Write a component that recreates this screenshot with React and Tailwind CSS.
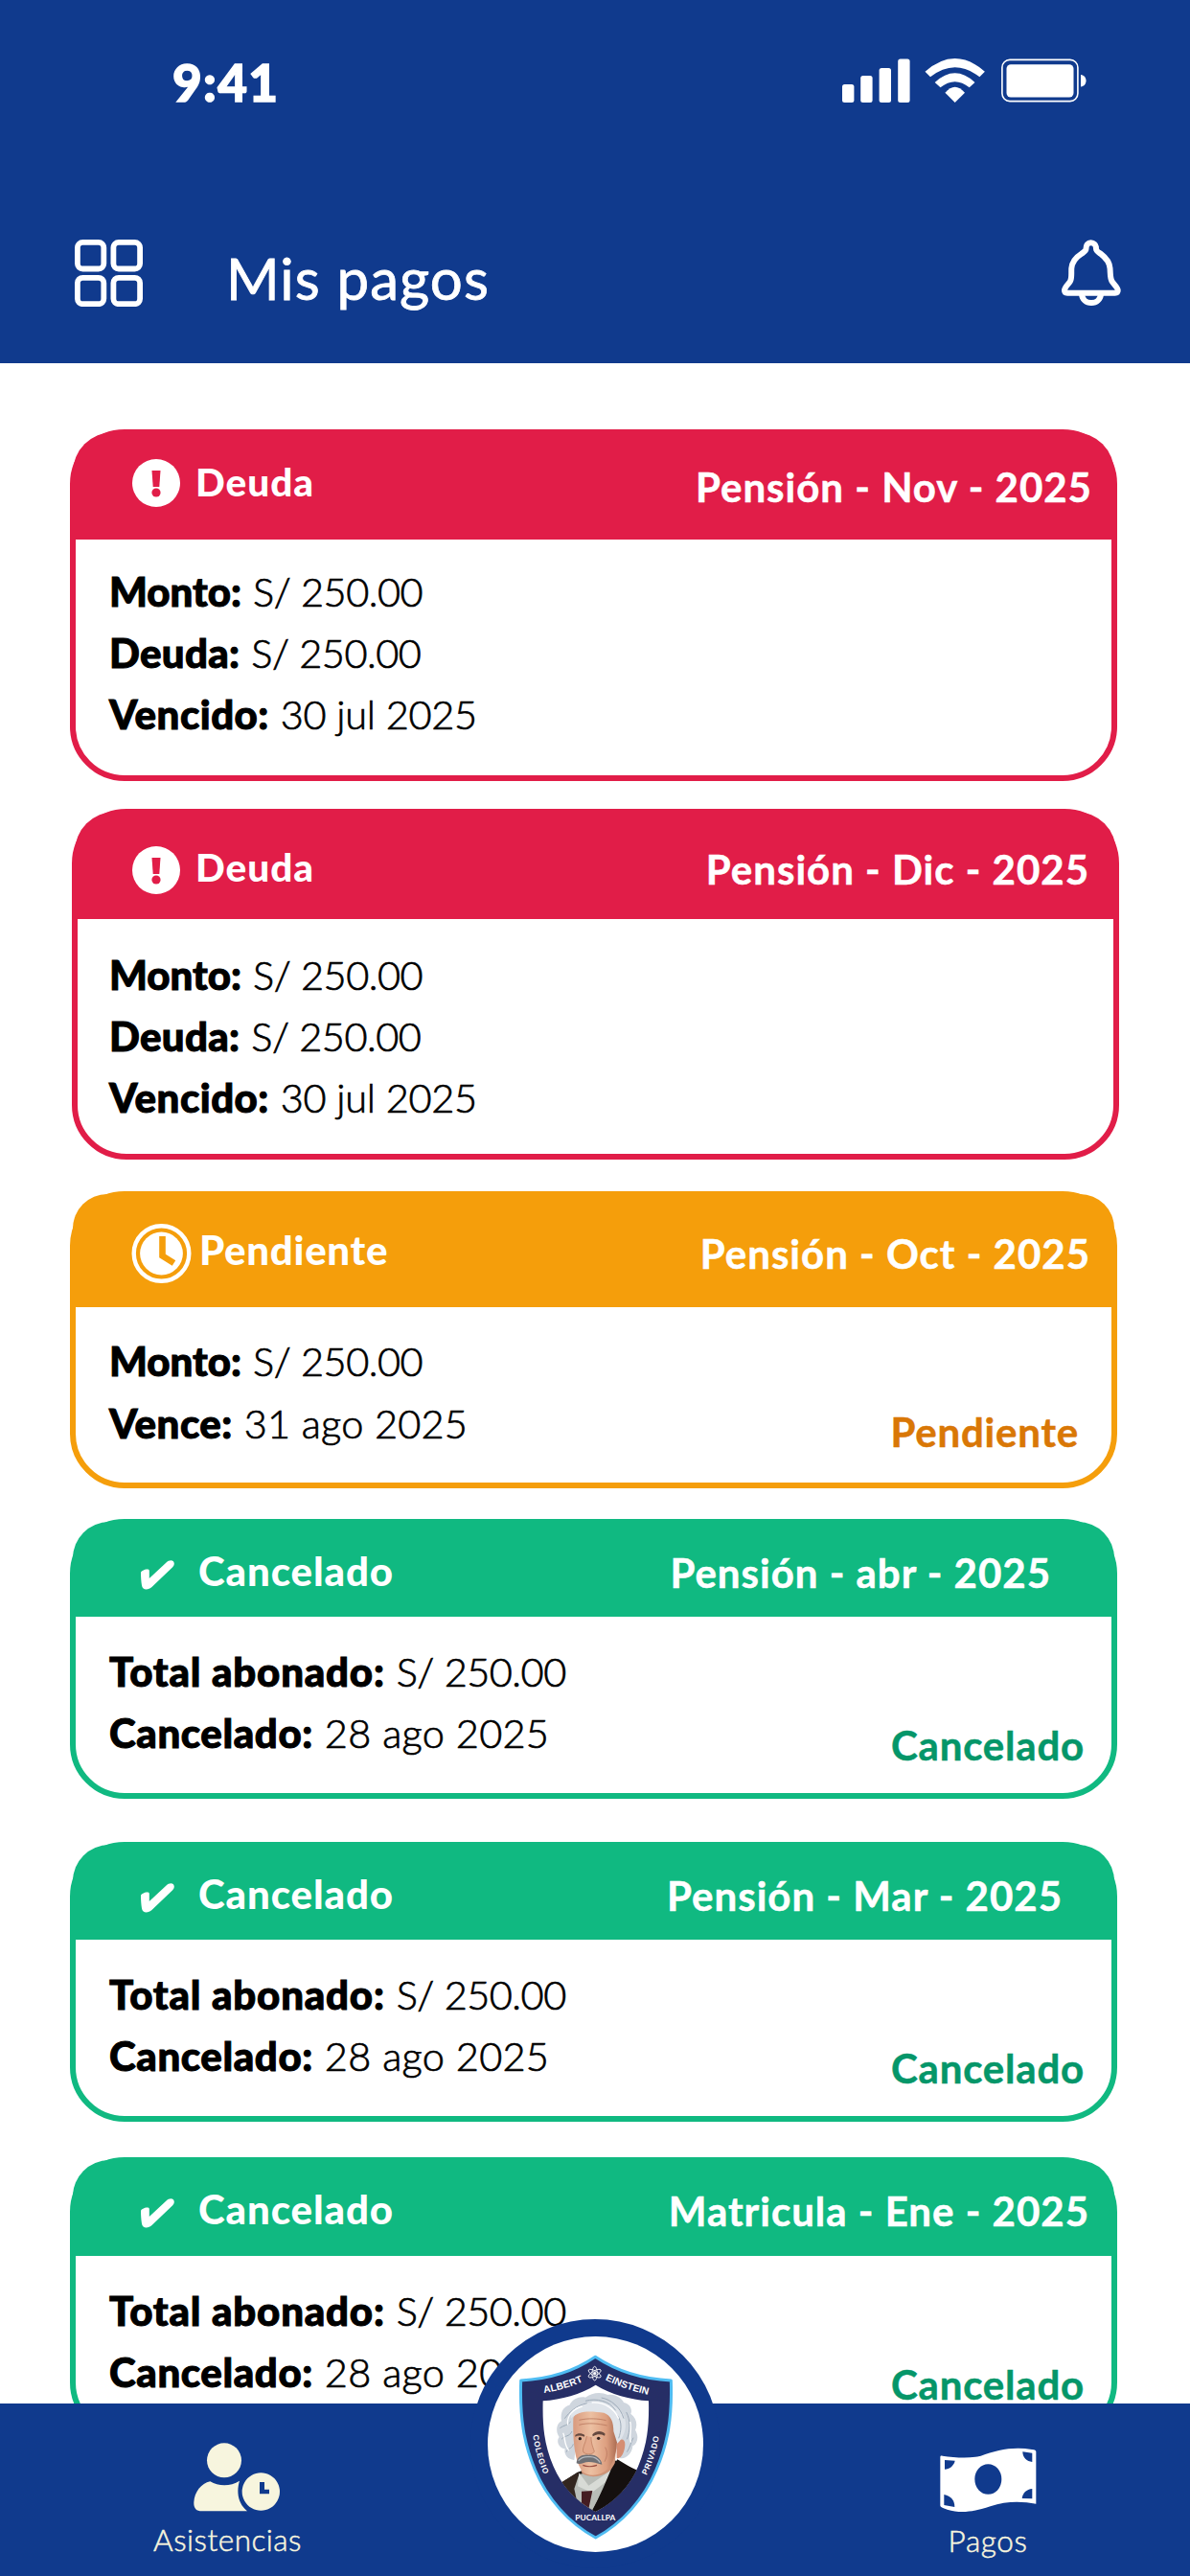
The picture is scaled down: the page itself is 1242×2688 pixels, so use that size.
import React from 'react'

const debtRows = [
  ['Monto:', 'S/ 250.00', 'tracking-[0px]', 'tracking-[-0.5px]'],
  ['Deuda:', 'S/ 250.00', 'tracking-[0.3px]', 'tracking-[-0.5px]'],
  ['Vencido:', '30 jul 2025', 'tracking-[0.5px]', 'tracking-[-0.3px]'],
]

const pendingRows = [
  ['Monto:', 'S/ 250.00', 'tracking-[0px]', 'tracking-[-0.5px]'],
  ['Vence:', '31 ago 2025', 'tracking-[0.5px]', 'tracking-[0.2px]'],
]

const paidRows = [
  ['Total abonado:', 'S/ 250.00', 'tracking-[0.8px]', 'tracking-[-0.5px]'],
  ['Cancelado:', '28 ago 2025', 'tracking-[0.6px]', 'tracking-[0.3px]'],
]

const paid = {
  status: 'Cancelado',
  tone: 'paid',
  icon: 'mt-[40px] w-[60px]',
  label: 'mt-[30px] text-[42px] tracking-[0.9px]',
  titleClass: 'mt-[32px]',
  body: 'pl-[35px] pt-[25px] leading-[64px]',
  rows: paidRows,
  badge: 'mt-[88px] mr-[28px]',
}

const payments = [
  {
    status: 'Deuda',
    title: 'Pensión - Nov - 2025',
    tone: 'debt',
    card: 'ml-[73px] mt-[69px] h-[367px]',
    header: 'h-[112px] pl-[62px] pr-[23px]',
    icon: 'mt-[28px] w-[66px]',
    label: 'mt-[32px] text-[40.5px] tracking-[1px]',
    titleClass: 'mt-[36px]',
    body: 'pl-[35px] pt-[22px] leading-[64px]',
    rows: debtRows,
  },
  {
    status: 'Deuda',
    title: 'Pensión - Dic - 2025',
    tone: 'debt',
    card: 'ml-[75px] mt-[29px] h-[366px]',
    header: 'h-[112px] pl-[60px] pr-[28px]',
    icon: 'mt-[36px] w-[66px]',
    label: 'mt-[38px] text-[40.5px] tracking-[1px]',
    titleClass: 'mt-[39px]',
    body: 'pl-[33px] pt-[26px] leading-[64px]',
    rows: debtRows,
  },
  {
    status: 'Pendiente',
    title: 'Pensión - Oct - 2025',
    tone: 'pending',
    card: 'ml-[73px] mt-[33px] h-[310px]',
    header: 'h-[118px] pl-[61px] pr-[25px]',
    icon: 'mt-[31px] w-[71px]',
    label: 'mt-[37px] text-[42px] tracking-[0.7px]',
    titleClass: 'mt-[41px]',
    body: 'pl-[35px] pt-[24px] leading-[65px]',
    rows: pendingRows,
    badge: 'mt-[85px] mr-[34px]',
  },
  {
    ...paid,
    title: 'Pensión - abr - 2025',
    card: 'ml-[73px] mt-[32px] h-[292px]',
    header: 'h-[99px] pl-[71px] pr-[66px]',
  },
  {
    ...paid,
    title: 'Pensión - Mar - 2025',
    card: 'ml-[73px] mt-[45px] h-[292px]',
    header: 'h-[99px] pl-[71px] pr-[54px]',
  },
  {
    ...paid,
    title: 'Matricula - Ene - 2025',
    card: 'ml-[73px] mt-[37px] h-[292px]',
    header: 'h-[100px] pl-[71px] pr-[26px]',
  },
]

const tones = {
  debt: { border: 'border-[#e11d48]', bg: 'bg-[#e11d48]', text: 'text-[#e11d48]', radius: 'rounded-t-[42px]' },
  pending: { border: 'border-[#f59e0b]', bg: 'bg-[#f59e0b]', text: 'text-[#d97706]', radius: 'rounded-t-[36px]' },
  paid: { border: 'border-[#10b981]', bg: 'bg-[#10b981]', text: 'text-[#059669]', radius: 'rounded-t-[38px]' },
}

function AlertIcon() {
  return (
    <svg width="50" height="50" viewBox="0 0 50 50">
      <circle cx="25" cy="25" r="25" fill="#fff" />
      <path d="M20.5 12h9l-1.2 17h-6.6z" fill="#e11d48" />
      <circle cx="25" cy="35" r="4.6" fill="#e11d48" />
    </svg>
  )
}

function ClockIcon() {
  return (
    <svg width="63" height="62" viewBox="0 0 63 62">
      <circle cx="31.5" cy="31" r="28.8" fill="none" stroke="#fff" strokeWidth="4.4" />
      <circle cx="31.5" cy="31" r="22.4" fill="#fff" />
      <path d="M32.5 13v20.5l12 7.5" fill="none" stroke="#f59e0b" strokeWidth="6.6" />
    </svg>
  )
}

function CheckIcon() {
  return (
    <svg width="35" height="31" viewBox="0 0 35 31" fill="#fff">
      <path d="M0 13C0 10.5 8.6 7.5 8.8 11V19L26.5 2.5C29.5-.4 34.5-.6 34.8 3.5C34.8 5 34.3 6 33.2 7.2L11.5 28C8 31.3 1.8 31.8 1 26.5C.3 22 0 17 0 13Z" />
    </svg>
  )
}

function StatusIcon({ tone }) {
  if (tone === 'debt') return <AlertIcon />
  if (tone === 'pending') return <ClockIcon />
  return <CheckIcon />
}

function PaymentCard({ item }) {
  const tone = tones[item.tone]
  return (
    <article className={`w-[1093px] shrink-0 rounded-[57px] border-[6px] bg-white ${tone.border} ${item.card}`}>
      <div className={`-mx-[3px] -mt-[3px] flex items-start leading-none text-white ${tone.bg} ${tone.radius} ${item.header}`}>
        <div className={`shrink-0 ${item.icon}`}>
          <StatusIcon tone={item.tone} />
        </div>
        <span className={`font-black ${item.label}`}>{item.status}</span>
        <h2 className={`ml-auto text-[42px] font-bold tracking-[1px] whitespace-nowrap [-webkit-text-stroke:0.5px_white] ${item.titleClass}`}>
          {item.title}
        </h2>
      </div>
      <div className={`flex items-start justify-between text-[42px] text-black ${item.body}`}>
        <div>
          {item.rows.map(([name, value, nameTracking, valueTracking]) => (
            <p key={name} className="whitespace-nowrap">
              <span className={`font-black [-webkit-text-stroke:1px_black] ${nameTracking}`}>{name}</span>
              <span className={`ml-[12px] text-[41.5px] font-light [-webkit-text-stroke:0.7px_black] ${valueTracking}`}>{value}</span>
            </p>
          ))}
        </div>
        {item.badge && (
          <span className={`font-bold leading-none tracking-[0.8px] [-webkit-text-stroke:0.5px_currentColor] ${tone.text} ${item.badge}`}>
            {item.status}
          </span>
        )}
      </div>
    </article>
  )
}

function StatusBar() {
  return (
    <div className="flex h-[170px] items-start pl-[180px] pr-[108px] text-white">
      <span className="mt-[59px] text-[53px] font-black leading-none tracking-[1.3px] [-webkit-text-stroke:1.5px_white]">9:41</span>
      <div className="ml-auto mt-[61px] flex items-start">
        <svg width="71" height="46" viewBox="0 0 71 46" fill="#fff">
          <rect x="0" y="27" width="12.4" height="19" rx="2.5" />
          <rect x="19.2" y="18" width="12.4" height="28" rx="2.5" />
          <rect x="38.6" y="10" width="12.4" height="36" rx="2.5" />
          <rect x="58.2" y="0.5" width="12.4" height="45.5" rx="2.5" />
        </svg>
        <svg className="ml-[15px]" width="64" height="46" viewBox="0 0 64 46" fill="#fff">
          <path d="M0.5 13.7Q31.7-13.7 62.9 13.7L57.4 19.3Q31.7-.7 6 19.3Z" />
          <path d="M10.7 25Q31.7 5.6 52.5 25L46.7 30.3Q31.7 18.3 16.5 30.3Z" />
          <path d="M21.4 35.7Q31.7 23.7 42 35.7L31.7 46Z" />
        </svg>
        <svg className="ml-[16px]" width="89" height="46" viewBox="0 0 89 46" fill="#fff">
          <rect x="0.9" y="1.4" width="79" height="43.2" rx="8" fill="none" stroke="#fff" strokeWidth="1.6" />
          <rect x="5.5" y="6.2" width="70" height="34.4" rx="4.5" />
          <path d="M83 17C86.5 17.5 88.5 20 88.5 23.3S86.5 29 83 29.6Z" />
        </svg>
      </div>
    </div>
  )
}

function TopBar() {
  return (
    <div className="flex items-start pl-[78px] pr-[72px] text-white">
      <svg className="mt-[80px]" width="71" height="70" viewBox="0 0 71 70" fill="none" stroke="#fff" strokeWidth="5.8">
        <rect x="2.9" y="2.9" width="27.4" height="27.6" rx="5.5" />
        <rect x="40.4" y="2.9" width="27.7" height="27.6" rx="5.5" />
        <rect x="2.9" y="39.8" width="27.4" height="27.4" rx="5.5" />
        <rect x="40.4" y="39.8" width="27.7" height="27.4" rx="5.5" />
      </svg>
      <h1 className="ml-[87px] mt-[90px] text-[60px] leading-none tracking-[1.1px] [-webkit-text-stroke:0.8px_white]">Mis pagos</h1>
      <svg className="ml-auto mt-[80px]" width="62" height="70" viewBox="0 0 62 70" fill="none" stroke="#fff" strokeWidth="6">
        <path d="M25.5 9.5C25.5 5.5 27.5 3.3 30.5 3.3S36 5.5 36 9.5C36 12 38 13 41 15C47 19.5 50 23.5 50.5 30C51 36 50.5 40 52.5 43.5C54.5 47 58.7 49.5 58.7 53C58.7 54.8 57.5 55.7 55.7 55.7H6C4 55.7 3 54.8 3 53C3 49.5 6.8 47 9 43.5C10.8 40 10 36 10.3 30C11 23.5 14 19 20.5 15C23 13 25.5 12 25.5 9.5Z" />
        <path d="M21 57C21.5 62.5 25.5 66 31 66S40.5 62.5 41 57" />
      </svg>
    </div>
  )
}

function SchoolLogo() {
  return (
    <svg width="225" height="225" viewBox="114 143 675 675">
      <defs>
        <clipPath id="window">
          <path d="M452 295C405 325 345 340 287 345C285 430 292 485 320 550C345 610 392 660 452 692C512 660 560 610 585 550C612 485 620 430 618 345C560 340 500 325 452 295Z" />
        </clipPath>
        <linearGradient id="skin" x1="0" x2="1">
          <stop offset="0" stopColor="#d99a7e" />
          <stop offset="0.4" stopColor="#ecc0a2" />
          <stop offset="0.75" stopColor="#dd9f80" />
          <stop offset="1" stopColor="#a9694f" />
        </linearGradient>
        <path id="arcAlbert" d="M290 320Q365 308 424 279" />
        <path id="arcEinstein" d="M482 279Q545 310 625 328" />
        <path id="arcColegio" d="M256 452Q265 520 294 584" />
        <path id="arcPrivado" d="M611 578Q640 520 652 448" />
      </defs>

      <path
        d="M451 207C385 252 305 277 218 281C214 400 228 480 262 560C300 650 368 728 452 773C536 728 604 650 642 560C677 480 692 400 688 281C600 277 518 252 451 207Z"
        fill="#262e66" stroke="#4fbcf2" strokeWidth="9" strokeLinejoin="round"
      />
      <path d="M452 295C405 325 345 340 287 345C285 430 292 485 320 550C345 610 392 660 452 692C512 660 560 610 585 550C612 485 620 430 618 345C560 340 500 325 452 295Z" fill="#fff" />

      {/* Portrait */}
      <g clipPath="url(#window)">
        <path d="M330 610L395 568L510 530L590 565L620 700H330Z" fill="#1b1412" />
        <path d="M345 600L398 568L395 670Z" fill="#33261f" />
        <path d="M400 575L505 550L488 600L440 690H400L385 620Z" fill="#b9bdb8" />
        <path d="M398 470L520 440L512 545C490 585 430 590 408 570Z" fill="#cf9376" />
        <path d="M400 570L430 610L500 562L508 580L440 632L396 612Z" fill="#d8dbd6" />
        <path d="M408 628L442 626L428 692H408Z" fill="#451d22" />
        <path d="M500 560L520 528L590 570L560 640L440 695L478 612Z" fill="#15100f" />
        {/* Hair */}
        <path
          d="M385 530C362 528 352 510 356 495C335 492 328 470 338 458C325 440 330 415 345 408C340 380 352 362 370 358C380 338 402 330 420 334C440 318 470 316 490 326C515 322 535 338 540 350C560 354 568 372 562 385C580 398 584 420 576 436C588 455 584 478 568 486C566 512 545 528 528 524L500 450L480 385L400 395Z"
          fill="#cfd6de"
        />
        <path d="M382 400C384 378 440 368 480 374C510 380 520 410 520 440C522 480 515 520 500 545C480 580 430 586 410 565C388 535 380 480 382 400Z" fill="url(#skin)" />
        <path d="M517 478C528 460 545 462 544 482C543 505 532 528 518 524Z" fill="#d58d72" />
        <path d="M375 400C400 372 440 378 478 382C500 390 508 410 508 440L520 478C545 455 552 420 540 390C520 350 450 335 400 360C380 370 372 385 375 400Z" fill="#dfe4ea" />
        <g fill="none" stroke="#9eabb9" strokeWidth="3">
          <path d="M355 400C370 380 390 360 425 352" />
          <path d="M420 345C455 335 495 345 515 375" />
          <path d="M340 430C352 420 366 422 374 410" />
          <path d="M345 465C358 450 368 460 378 440" />
          <path d="M360 505C366 490 376 498 382 480" />
          <path d="M470 335C500 340 530 365 540 400" />
          <path d="M520 390C536 410 532 440 524 462" />
          <path d="M548 380C562 405 560 440 550 465" />
          <path d="M550 505C560 490 562 475 570 460" />
        </g>
        <g fill="none" stroke="#fff" strokeWidth="4">
          <path d="M365 420C360 390 385 368 410 362" />
          <path d="M440 350C480 348 510 368 524 400" />
          <path d="M350 445C358 462 352 480 368 500" />
          <path d="M560 410C566 432 556 455 562 475" />
        </g>
        <g fill="none" stroke="#bb7a60" strokeWidth="2.5">
          <path d="M400 405C430 398 460 400 485 406" />
          <path d="M400 420C430 412 460 416 488 422" />
          <path d="M482 490C490 505 488 520 480 535" />
        </g>
        {/* Brows, eyes, nose and moustache */}
        <path d="M388 452C396 444 410 446 418 452L416 457C406 452 396 452 388 457Z" fill="#65493f" />
        <path d="M442 450C455 436 472 438 482 448L480 454C468 448 456 448 443 456Z" fill="#65493f" />
        <ellipse cx="402" cy="463" rx="11" ry="4.5" fill="#dcb39c" />
        <ellipse cx="462" cy="462" rx="12" ry="4.5" fill="#dcb39c" />
        <circle cx="403" cy="463" r="5" fill="#33221d" />
        <circle cx="461" cy="462" r="5" fill="#33221d" />
        <path d="M424 455C420 480 408 495 414 506C424 514 440 514 448 504C444 490 438 480 438 458" fill="#e3a98c" stroke="#b67458" strokeWidth="2" />
        <path d="M392 540C392 520 412 510 430 514C450 510 470 524 472 544C455 540 445 536 430 536C415 536 405 546 392 540Z" fill="#6e7075" />
        <path d="M398 532C410 518 425 520 430 520C448 518 460 528 466 538" fill="none" stroke="#b5b9be" strokeWidth="4" />
        <path d="M412 546C425 552 445 550 456 546" fill="none" stroke="#9a4f42" strokeWidth="4" />
      </g>

      {/* Atom */}
      <g fill="none" stroke="#fff" strokeWidth="2.5">
        <ellipse cx="449" cy="259" rx="8" ry="22" />
        <ellipse cx="449" cy="259" rx="8" ry="22" transform="rotate(60 449 259)" />
        <ellipse cx="449" cy="259" rx="8" ry="22" transform="rotate(120 449 259)" />
        <circle cx="449" cy="259" r="4" fill="#fff" />
      </g>

      <g fill="#fff" fontFamily="Liberation Sans" fontWeight="700">
        <text fontSize="31"><textPath href="#arcAlbert" textLength="128">ALBERT</textPath></text>
        <text fontSize="31"><textPath href="#arcEinstein" textLength="142">EINSTEIN</textPath></text>
        <text fontSize="25"><textPath href="#arcColegio" textLength="128">COLEGIO</textPath></text>
        <text fontSize="25"><textPath href="#arcPrivado" textLength="128">PRIVADO</textPath></text>
        <text x="388" y="720" fontSize="25" fontFamily="Lato" textLength="126">PUCALLPA</text>
      </g>
    </svg>
  )
}

function BottomNav() {
  return (
    <nav className="relative flex h-[180px] shrink-0 justify-between bg-[#103a8d] pl-[160px] pr-[160px] text-[31.5px] font-light leading-none text-[#f7f5de]">
      <a className="flex w-[155px] flex-col items-center">
        <svg className="ml-[18px] mt-[41px]" width="90" height="72" viewBox="306 206 270 216" fill="#f7f5de">
          <circle cx="402" cy="261" r="54" />
          <path d="M358 327C385 343 422 343 450 325C440 358 444 395 474 420H332C314 420 306 410 307 392C309 360 330 333 358 327Z" />
          <path fillRule="evenodd" d="M517 300A59 59 0 1 1 516.9 300ZM513 329V366H543V352H528V329Z" />
        </svg>
        <span className="mt-[14px] tracking-[0.5px] [-webkit-text-stroke:0.5px_#f7f5de]">Asistencias</span>
      </a>

      <div className="absolute -top-[88px] left-[491px] flex size-[260px] items-center justify-center rounded-full bg-[#103a8d]">
        <div className="rounded-full bg-white">
          <SchoolLogo />
        </div>
      </div>

      <a className="flex w-[102px] flex-col items-center">
        <svg className="mt-[46px]" width="101" height="68" viewBox="242 284 303 204">
          <path d="M243 314C243 310 246 309 250 310C290 316 340 318 370 310C420 292 470 280 530 290C540 291 543 293 543 297V460C500 452 450 450 400 468C350 484 310 492 265 478C250 473 243 471 243 465Z" fill="#fff" />
          <g fill="#103a8d">
            <ellipse cx="393" cy="383" rx="42" ry="47.5" />
            <path d="M257 323L289 325C286 341 272 351 257 352Z" />
            <path d="M501 297L531 301V329C514 328 501 315 501 297Z" />
            <path d="M255 431C277 435 288 450 288 470L255 464Z" />
            <path d="M531 413V444L499 443C501 427 513 414 531 413Z" />
          </g>
        </svg>
        <span className="mt-[14px] tracking-[0.6px] [-webkit-text-stroke:0.5px_#f7f5de]">Pagos</span>
      </a>
    </nav>
  )
}

export default function App() {
  return (
    <div className="flex h-[2688px] w-[1242px] flex-col overflow-hidden bg-white font-['Lato',sans-serif]">
      <header className="h-[379px] shrink-0 bg-[#103a8d]">
        <StatusBar />
        <TopBar />
      </header>
      <main className="flex min-h-0 flex-1 flex-col overflow-hidden">
        {payments.map((item) => (
          <PaymentCard key={item.title} item={item} />
        ))}
      </main>
      <BottomNav />
    </div>
  )
}
